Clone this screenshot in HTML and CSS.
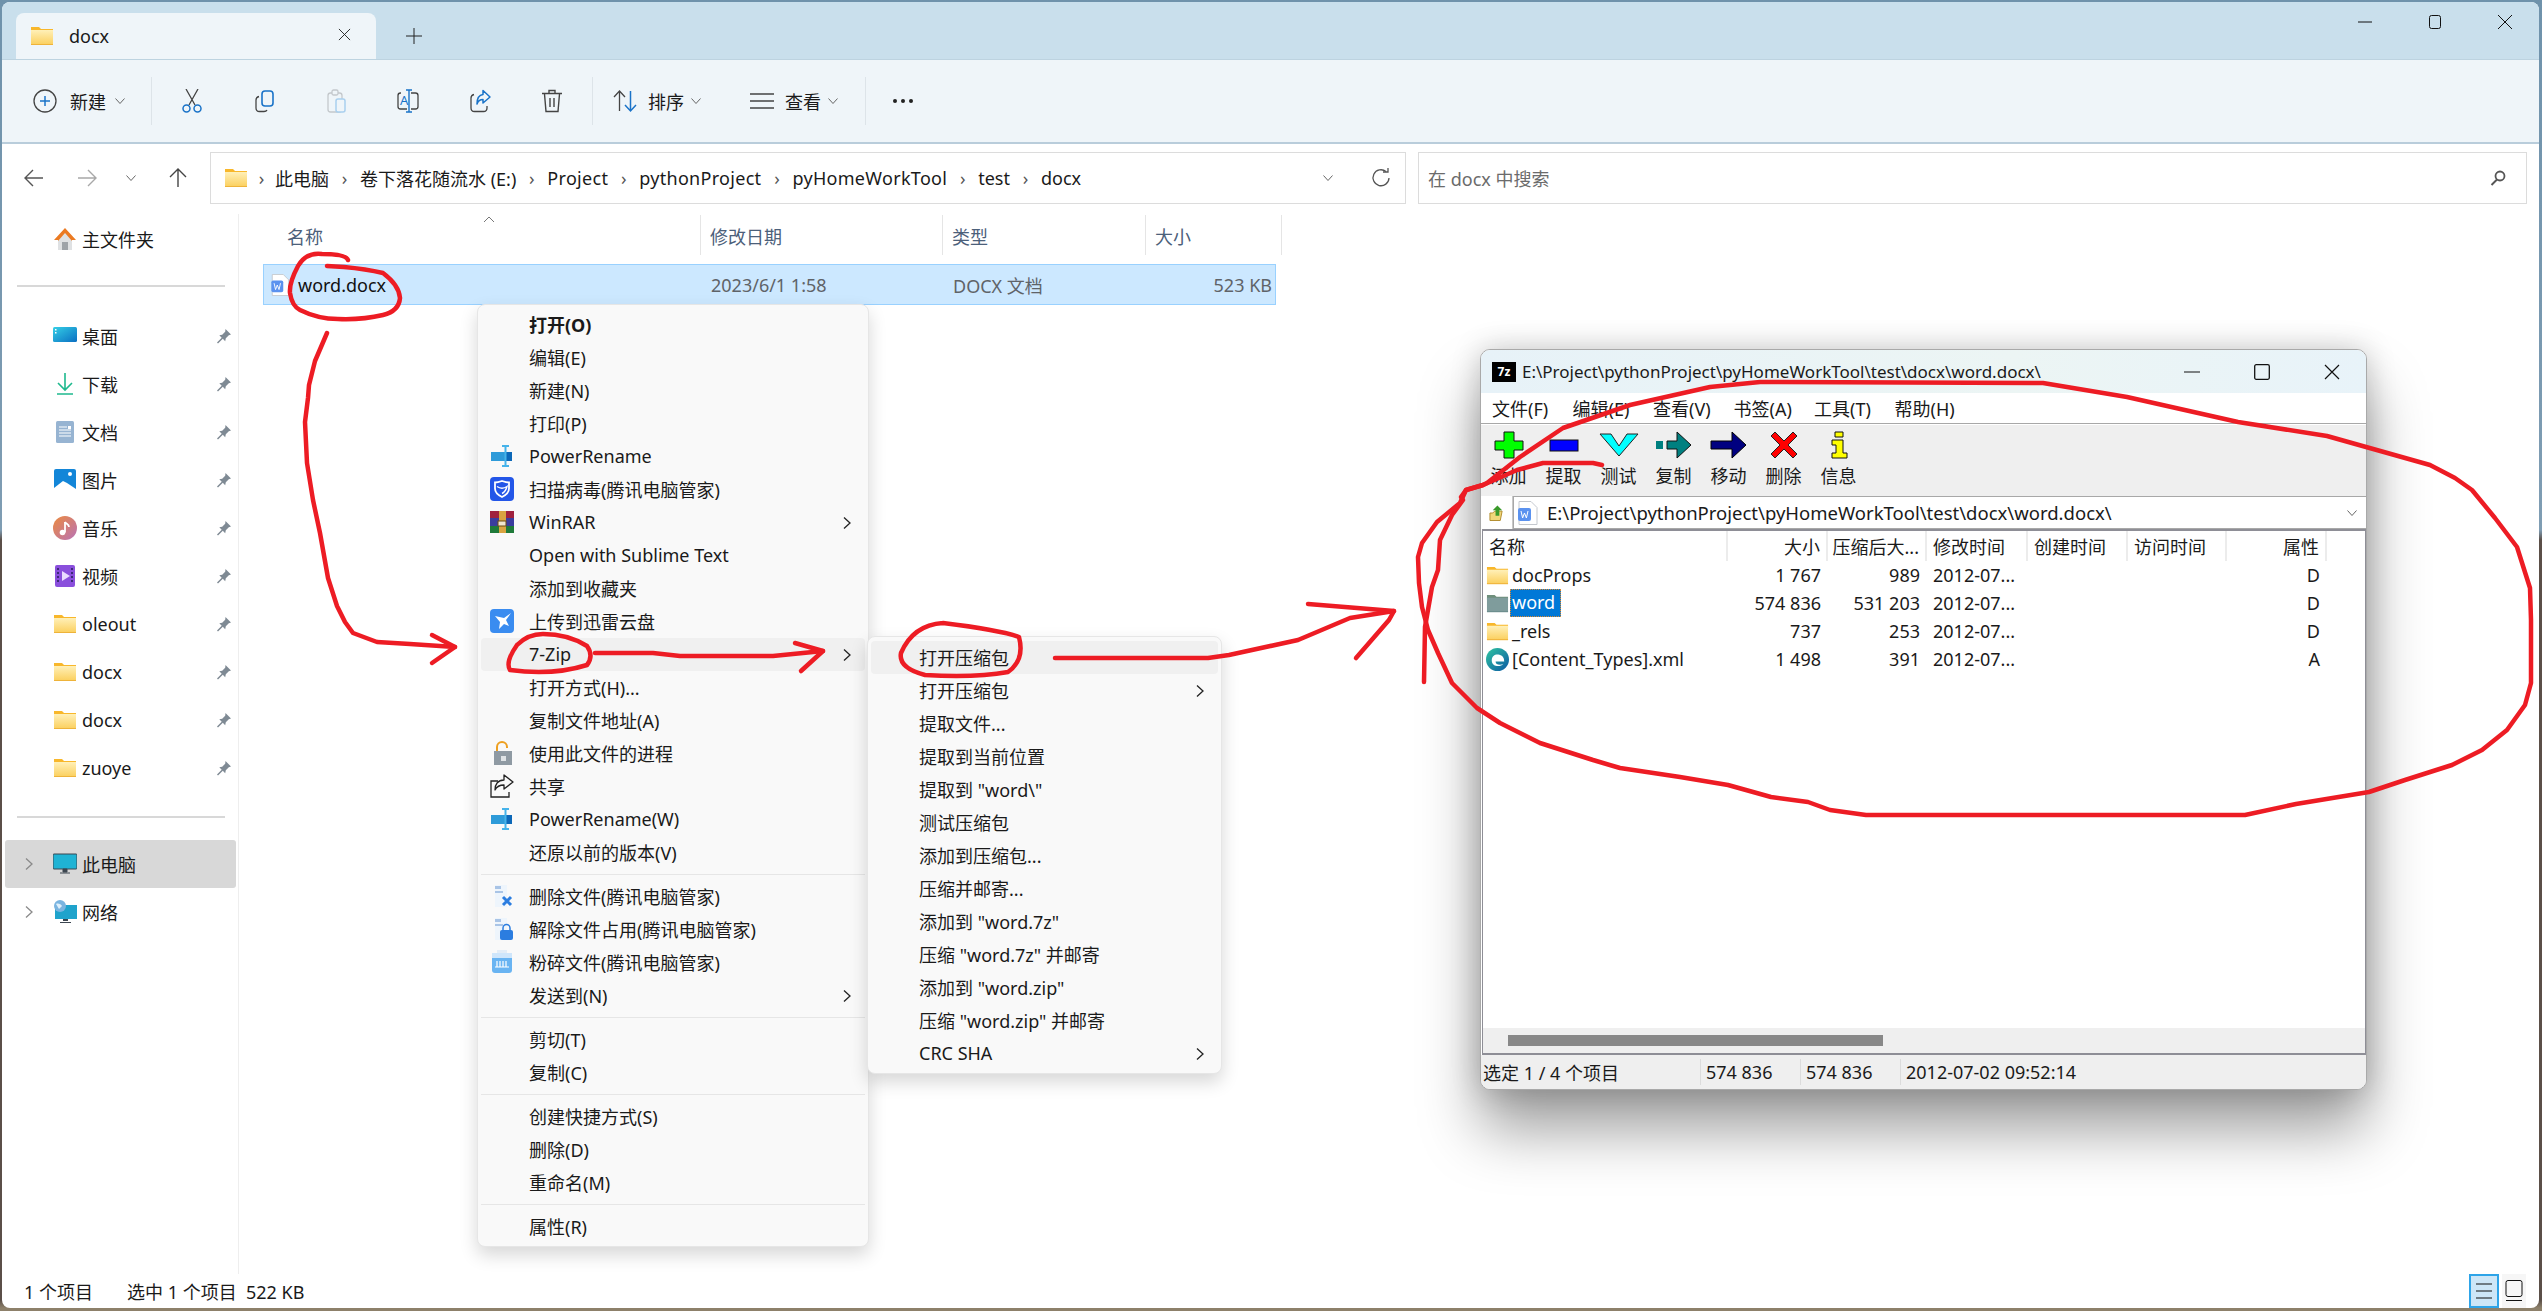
FILE: index.html
```html
<!DOCTYPE html>
<html lang="zh-CN">
<head>
<meta charset="utf-8">
<title>docx</title>
<link rel="stylesheet" href="styles.css">
</head>
<body>
<svg class="defs" aria-hidden="true">
  <defs>
    <linearGradient id="fg" x1="0" y1="0" x2="0" y2="1"><stop offset="0" stop-color="#fff0b8"/><stop offset="1" stop-color="#fbcf5c"/></linearGradient>
    <linearGradient id="dg" x1="0" y1="0" x2="1" y2="1"><stop offset="0" stop-color="#35cfe6"/><stop offset="1" stop-color="#0a6fc2"/></linearGradient>
    <linearGradient id="mg" x1="0" y1="0" x2="1" y2="1"><stop offset="0" stop-color="#ec8a3e"/><stop offset="1" stop-color="#b872b8"/></linearGradient>
    <linearGradient id="eg" x1="0" y1="0" x2="1" y2="1"><stop offset="0" stop-color="#30c5a0"/><stop offset="1" stop-color="#0c59a4"/></linearGradient>
    <symbol id="folder" viewBox="0 0 24 20"><path d="M1 1h8l2 2h12v3H1z" fill="#f8b72b"/><path d="M1 4h22v15H1z" fill="url(#fg)"/><path d="M1 18h22v1H1z" fill="#eeb33a"/></symbol>
    <symbol id="folder-sel" viewBox="0 0 24 20"><path d="M1 1h8l2 2h12v3H1z" fill="#6f8f7c"/><path d="M1 4h22v15H1z" fill="#7f9c9c"/><path d="M1 18h22v1H1z" fill="#6a8c8c"/></symbol>
    <symbol id="pin" viewBox="0 0 16 16"><path d="M9.500 1 15 6.500l-2.200.8-3 3-.6 2.900-2.400-2.400L2 15.500l-1-1 4.700-4.800-2.400-2.400 2.900-.6 3-3z" fill="#7f8a94"/></symbol>
    <symbol id="doc" viewBox="0 0 20 24"><path d="M1 .5h12l6 6v17H1z" fill="#fff" stroke="#c4c8ce"/><rect x="0" y="7" width="13" height="13" rx="2" fill="#5b92ef"/><path d="M3 10l1.600 7 1.900-5 1.900 5L10 10" fill="none" stroke="#fff"/></symbol>
    <symbol id="rename" viewBox="0 0 24 24"><rect x="1" y="8" width="15" height="9" fill="#2e9bd9"/><rect x="15" y="8" width="7" height="9" fill="#0c68b8"/><path d="M15.500 2v20M12 2h7M12 22h7" stroke="#46b3ea" stroke-width="2" fill="none"/></symbol>
    <symbol id="chev" viewBox="0 0 10 14"><path d="M2 1.500 8 7l-6 5.500" fill="none" stroke="#222" stroke-width="1.300"/></symbol>
    <symbol id="down" viewBox="0 0 12 8"><path d="M1.500 1.500 6 6.500l4.500-5" fill="none" stroke="#666" stroke-width="1"/></symbol>
    <symbol id="right" viewBox="0 0 10 14"><path d="M2 1.500 8 7l-6 5.500" fill="none" stroke="#8a8a8a" stroke-width="1.300"/></symbol>
    <symbol id="filedel" viewBox="0 0 24 24"><path d="M5 1h12v22H5z" fill="#eef5fc"/><path d="M5 2h6v3H5zM5 7h8v2H5z" fill="#a9c4e6"/></symbol>
  </defs>
</svg>

<div class="desktop">
  <div class="explorer">
    <div class="tabbar">
      <div class="tab">
        <svg class="ic-folder"><use href="#folder"/></svg>
        <span class="tab-title">docx</span>
        <svg class="tab-x" viewBox="0 0 14 14"><path d="M1 1l12 12M13 1 1 13" stroke="#222" fill="none"/></svg>
      </div>
      <svg class="tab-plus" viewBox="0 0 16 16"><path d="M8 0v16M0 8h16" stroke="#222" fill="none"/></svg>
      <div class="caption">
        <svg class="cap-btn" viewBox="0 0 16 16"><path d="M1 8h14" stroke="#111" fill="none"/></svg>
        <svg class="cap-btn" viewBox="0 0 16 16"><rect x="2.500" y="1.500" width="11" height="13" rx="2" stroke="#111" fill="none"/></svg>
        <svg class="cap-btn" viewBox="0 0 16 16"><path d="M1 1l14 14M15 1 1 15" stroke="#111" fill="none"/></svg>
      </div>
    </div>

    <div class="toolbar">
      <div class="tb-new">
        <svg class="tb-ic" viewBox="0 0 24 24"><circle cx="12" cy="12" r="11" fill="none" stroke="#444" stroke-width="1.300"/><path d="M12 7v10M7 12h10" stroke="#1a73c8" stroke-width="1.500"/></svg>
        <span>新建</span>
        <svg class="tb-down"><use href="#down"/></svg>
      </div>
      <i class="tb-sep"></i>
      <div class="tb-btn"><svg class="tb-ic" viewBox="0 0 24 24"><path d="M6 0l9 16M18 0 9 16" fill="none" stroke="#444" stroke-width="1.300"/><circle cx="6.500" cy="19.500" r="3.500" fill="none" stroke="#1a73c8" stroke-width="1.500"/><circle cx="17.500" cy="19.500" r="3.500" fill="none" stroke="#1a73c8" stroke-width="1.500"/></svg></div>
      <div class="tb-btn"><svg class="tb-ic" viewBox="0 0 24 24"><rect x="10" y="2" width="11" height="15" rx="3" fill="none" stroke="#1a73c8" stroke-width="1.600"/><path d="M7 7.500c-2 .5-3 1.500-3 3.500v8c0 2.500 1.500 3.500 3.500 3.500H12c1.500 0 2.500-.5 3-1.500" fill="none" stroke="#444" stroke-width="1.300"/></svg></div>
      <div class="tb-btn"><svg class="tb-ic" viewBox="0 0 24 24"><rect x="4" y="4" width="14" height="19" rx="2.500" fill="none" stroke="#c4c8cc" stroke-width="1.300"/><rect x="8" y="1" width="6" height="5" rx="1.500" fill="#eff5f9" stroke="#c4c8cc" stroke-width="1.300"/><rect x="12" y="10" width="9" height="13" rx="2" fill="#eff5f9" stroke="#a9cfee" stroke-width="1.500"/></svg></div>
      <div class="tb-btn"><svg class="tb-ic" viewBox="0 0 24 24"><path d="M5 4h-.5A2.500 2.500 0 0 0 2 6.500v11A2.500 2.500 0 0 0 4.500 20H11M15 4h4.500A2.500 2.500 0 0 1 22 6.500v11a2.500 2.500 0 0 1-2.500 2.500H15" fill="none" stroke="#444" stroke-width="1.300"/><path d="M13 1v22M10 1h6M10 23h6" stroke="#1a73c8" stroke-width="1.400" fill="none"/><text class="tb-a" x="4" y="16">A</text></svg></div>
      <div class="tb-btn"><svg class="tb-ic" viewBox="0 0 24 24"><path d="M6 5.500C4 6 3 7 3 9v10c0 2 1.500 3.500 3.500 3.500h9c2 0 3.500-1.500 3.500-3.500v-2" fill="none" stroke="#444" stroke-width="1.300"/><path d="M15 1.500 22 8l-7 6v-3.500c-3 0-5 1.500-6 4.500 0-6 2-9 6-9.500z" fill="none" stroke="#1a73c8" stroke-width="1.500" stroke-linejoin="round"/></svg></div>
      <div class="tb-btn"><svg class="tb-ic" viewBox="0 0 24 24"><path d="M2 4.500h20M9 4V1.500h6V4M4.500 5l1.500 17.500h12L19.500 5M10 9v9M14 9v9" fill="none" stroke="#444" stroke-width="1.400"/></svg></div>
      <i class="tb-sep"></i>
      <div class="tb-text tb-sort">
        <svg class="tb-ic" viewBox="0 0 24 24"><path d="M6.500 22V2M1 8l5.500-6L12 8" fill="none" stroke="#444" stroke-width="1.300"/><path d="M17.500 2v20M12 16l5.500 6 5.500-6" fill="none" stroke="#1a73c8" stroke-width="1.500"/></svg>
        <span>排序</span>
        <svg class="tb-down"><use href="#down"/></svg>
      </div>
      <div class="tb-text tb-view">
        <svg class="tb-ic" viewBox="0 0 24 24"><path d="M0 5h24M0 12h24M0 19h24" fill="none" stroke="#444" stroke-width="1.600"/></svg>
        <span>查看</span>
        <svg class="tb-down"><use href="#down"/></svg>
      </div>
      <i class="tb-sep"></i>
      <span class="tb-more"><i></i><i></i><i></i></span>
    </div>

    <div class="addr-row">
      <div class="nav-btns">
        <svg class="nav-ic" viewBox="0 0 20 20"><path d="M19 10H1M9 2l-8 8 8 8" fill="none" stroke="#555" stroke-width="1.400"/></svg>
        <svg class="nav-ic" viewBox="0 0 20 20"><path d="M1 10h18M11 2l8 8-8 8" fill="none" stroke="#a8a8a8" stroke-width="1.400"/></svg>
        <svg class="nav-dn"><use href="#down"/></svg>
        <svg class="nav-ic" viewBox="0 0 20 20"><path d="M10 19V1M2 9l8-8 8 8" fill="none" stroke="#444" stroke-width="1.400"/></svg>
      </div>
      <div class="breadcrumb">
        <svg class="ic-folder"><use href="#folder"/></svg>
        <span class="bc-sep first">›</span><span>此电脑</span>
        <span class="bc-sep">›</span><span>卷下落花随流水 (E:)</span>
        <span class="bc-sep">›</span><span class="bc-ls">Project</span>
        <span class="bc-sep">›</span><span class="bc-ls">pythonProject</span>
        <span class="bc-sep">›</span><span class="bc-ls">pyHomeWorkTool</span>
        <span class="bc-sep">›</span><span>test</span>
        <span class="bc-sep">›</span><span>docx</span>
        <svg class="bc-down"><use href="#down"/></svg>
        <svg class="bc-ref" viewBox="0 0 20 20"><path d="M15 3.500A8 8 0 1 0 18 10" fill="none" stroke="#555" stroke-width="1.300"/><path d="M12 4h5V0" fill="none" stroke="#555" stroke-width="1.300"/></svg>
      </div>
      <div class="searchbox">
        <span>在 docx 中搜索</span>
        <svg class="search-ic" viewBox="0 0 16 16"><circle cx="10" cy="6" r="4.500" fill="none" stroke="#555" stroke-width="1.800"/><path d="M7 9.500 1.500 15" stroke="#555" stroke-width="2"/></svg>
      </div>
    </div>

    <div class="main">
      <nav class="sidebar">
        <div class="nav-row">
          <svg class="nav-icon" viewBox="0 0 24 24"><path d="M12 1 1 13h4v10h14V13h4z" fill="#eb7a22"/><path d="M12 6l-7 8v9h14v-9z" fill="#dfe1e3"/><path d="M9 15h6v8H9z" fill="#9ea3a8"/></svg>
          <span class="nav-text">主文件夹</span>
        </div>
        <hr class="nav-hr first">
        <div class="nav-row">
          <svg class="nav-icon" viewBox="0 0 24 24"><rect y="3" width="24" height="15" rx="1.500" fill="url(#dg)"/><path d="M2 5h1.500v1.500H2zM2 8h1.500v1.500H2z" fill="#fff"/></svg>
          <span class="nav-text">桌面</span><svg class="nav-pin"><use href="#pin"/></svg>
        </div>
        <div class="nav-row">
          <svg class="nav-icon" viewBox="0 0 24 24"><path d="M12 1v17M5 11l7 7 7-7M4 22h16" fill="none" stroke="#1fb98e" stroke-width="1.600"/></svg>
          <span class="nav-text">下载</span><svg class="nav-pin"><use href="#pin"/></svg>
        </div>
        <div class="nav-row">
          <svg class="nav-icon" viewBox="0 0 24 24"><rect x="3" y="1" width="18" height="22" rx="1.500" fill="#97b4d2"/><path d="M6 7h8M6 10h12M6 13h12M6 16h12" stroke="#fff" stroke-width="1.100"/><rect x="15" y="6" width="3" height="3" fill="#fff"/></svg>
          <span class="nav-text">文档</span><svg class="nav-pin"><use href="#pin"/></svg>
        </div>
        <div class="nav-row">
          <svg class="nav-icon" viewBox="0 0 24 24"><rect x="1" y="1" width="22" height="22" rx="2" fill="#1386d8"/><path d="M1 23v-3l9-7 4 2 9 6v2z" fill="#fff"/><circle cx="17" cy="6" r="2" fill="#fff"/></svg>
          <span class="nav-text">图片</span><svg class="nav-pin"><use href="#pin"/></svg>
        </div>
        <div class="nav-row">
          <svg class="nav-icon" viewBox="0 0 24 24"><circle cx="12" cy="12" r="12" fill="url(#mg)"/><path d="M12 6v10.500" stroke="#fff" stroke-width="1.800"/><path d="M12 6c1 2 4 2 4 5" fill="none" stroke="#fff" stroke-width="1.800"/><circle cx="9.500" cy="16.500" r="2.800" fill="#fff"/></svg>
          <span class="nav-text">音乐</span><svg class="nav-pin"><use href="#pin"/></svg>
        </div>
        <div class="nav-row">
          <svg class="nav-icon" viewBox="0 0 24 24"><rect x="2" y="1" width="20" height="22" rx="2" fill="#8a4fdc"/><path d="M4 4h2v2H4zM4 8h2v2H4zM4 12h2v2H4zM4 16h2v2H4zM18 4h2v2h-2zM18 8h2v2h-2zM18 12h2v2h-2zM18 16h2v2h-2z" fill="#3d2a78"/><path d="M9 7l8 5-8 5z" fill="#eadcff"/></svg>
          <span class="nav-text">视频</span><svg class="nav-pin"><use href="#pin"/></svg>
        </div>
        <div class="nav-row"><svg class="nav-icon"><use href="#folder"/></svg><span class="nav-text">oleout</span><svg class="nav-pin"><use href="#pin"/></svg></div>
        <div class="nav-row"><svg class="nav-icon"><use href="#folder"/></svg><span class="nav-text">docx</span><svg class="nav-pin"><use href="#pin"/></svg></div>
        <div class="nav-row"><svg class="nav-icon"><use href="#folder"/></svg><span class="nav-text">docx</span><svg class="nav-pin"><use href="#pin"/></svg></div>
        <div class="nav-row"><svg class="nav-icon"><use href="#folder"/></svg><span class="nav-text">zuoye</span><svg class="nav-pin"><use href="#pin"/></svg></div>
        <hr class="nav-hr">
        <div class="nav-row is-active">
          <svg class="nav-tw"><use href="#right"/></svg>
          <svg class="nav-icon" viewBox="0 0 24 24"><rect x="0" y="2" width="24" height="15" rx="1" fill="#1fb3d4" stroke="#3c4650"/><path d="M10 17h4v3h-4zM7 21h10" fill="#3c4650" stroke="#3c4650"/></svg>
          <span class="nav-text">此电脑</span>
        </div>
        <div class="nav-row">
          <svg class="nav-tw"><use href="#right"/></svg>
          <svg class="nav-icon" viewBox="0 0 24 24"><rect x="2" y="5" width="22" height="14" fill="#1fa3cc"/><path d="M10 19h5v2h-5zM7 22h11v1H7z" fill="#3c4650"/><circle cx="7" cy="6" r="6" fill="#7ab4e0"/><path d="M3 4c2-1 5 0 6 2l-3 3z" fill="#dff0fb"/></svg>
          <span class="nav-text">网络</span>
        </div>
      </nav>

      <section class="files">
        <svg class="sort-caret" viewBox="0 0 12 7"><path d="M1 6l5-5 5 5" fill="none" stroke="#777"/></svg>
        <div class="col-head">
          <span class="col-name">名称</span>
          <span>修改日期</span>
          <span>类型</span>
          <span>大小</span>
        </div>
        <div class="file-row">
          <span class="f-name"><svg class="f-ic"><use href="#doc"/></svg><b>word.docx</b></span>
          <span>2023/6/1 1:58</span>
          <span>DOCX 文档</span>
          <span class="f-size">523 KB</span>
        </div>
      </section>
    </div>

    <footer class="statusbar">
      <span class="st-a">1 个项目</span>
      <span>选中 1 个项目&nbsp; 522 KB</span>
      <span class="view-btn is-on"><svg viewBox="0 0 20 24"><path d="M2 5h16M2 12h16M2 19h16" stroke="#111" fill="none"/></svg></span>
      <span class="view-btn"><svg viewBox="0 0 20 24"><rect x="2" y="1.500" width="16" height="16" rx="2" stroke="#111" fill="none"/><path d="M2 21.500h16" stroke="#111"/></svg></span>
    </footer>
  </div>

  <div class="menu ctx">
    <div class="mi is-bold"><span class="mi-ic"></span>打开(O)</div>
    <div class="mi"><span class="mi-ic"></span>编辑(E)</div>
    <div class="mi"><span class="mi-ic"></span>新建(N)</div>
    <div class="mi"><span class="mi-ic"></span>打印(P)</div>
    <div class="mi"><span class="mi-ic"><svg viewBox="0 0 24 24"><use href="#rename"/></svg></span>PowerRename</div>
    <div class="mi"><span class="mi-ic"><svg viewBox="0 0 24 24"><rect width="24" height="24" rx="4" fill="#2356e8"/><path d="M12 4c3 1 5 1.500 7 1.500v6c0 4-3 6.500-7 8.500-4-2-7-4.500-7-8.500v-6C7 5.500 9 5 12 4z" fill="none" stroke="#fff" stroke-width="1.800"/><path d="M7 9.500c3 2 7 2 10 0-1 4-3 6-5 7" fill="none" stroke="#fff" stroke-width="1.400"/></svg></span>扫描病毒(腾讯电脑管家)</div>
    <div class="mi"><span class="mi-ic"><svg viewBox="0 0 24 24"><rect y="1" width="24" height="7" fill="#a0213e"/><rect y="8" width="24" height="8" fill="#3a3d9e"/><rect y="16" width="24" height="7" fill="#1f7a3a"/><rect x="9" y="1" width="7" height="22" fill="#d9a441"/><rect x="8" y="11" width="8" height="5" fill="#efe6cf" stroke="#6b4d12"/></svg></span>WinRAR<svg class="mi-chev"><use href="#chev"/></svg></div>
    <div class="mi"><span class="mi-ic"></span>Open with Sublime Text</div>
    <div class="mi"><span class="mi-ic"></span>添加到收藏夹</div>
    <div class="mi"><span class="mi-ic"><svg viewBox="0 0 24 24"><rect width="24" height="24" rx="4" fill="#3a8cf0"/><path d="M21 4 14 9 5 7l5 6-1 7 5-5 5 2-3-6z" fill="#fff"/></svg></span>上传到迅雷云盘</div>
    <div class="mi is-hot"><span class="mi-ic"></span>7-Zip<svg class="mi-chev"><use href="#chev"/></svg></div>
    <div class="mi"><span class="mi-ic"></span>打开方式(H)...</div>
    <div class="mi"><span class="mi-ic"></span>复制文件地址(A)</div>
    <div class="mi"><span class="mi-ic"><svg viewBox="0 0 24 24"><path d="M7 11V6a5 5 0 0 1 10 0v1" fill="none" stroke="#eea021" stroke-width="2"/><rect x="4" y="10" width="18" height="14" fill="#8f9aa3"/><rect x="11" y="15" width="5" height="5" fill="#dfe3e6"/></svg></span>使用此文件的进程</div>
    <div class="mi"><span class="mi-ic"><svg viewBox="0 0 24 24"><path d="M8 7H1v16h18v-5" fill="none" stroke="#222" stroke-width="1.300"/><path d="M14 1l9 7-9 7v-4c-4 0-7 1-9 5 0-6 3-10 9-10z" fill="none" stroke="#222" stroke-width="1.300" stroke-linejoin="round"/></svg></span>共享</div>
    <div class="mi"><span class="mi-ic"><svg viewBox="0 0 24 24"><use href="#rename"/></svg></span>PowerRename(W)</div>
    <div class="mi"><span class="mi-ic"></span>还原以前的版本(V)</div>
    <hr class="mi-sep">
    <div class="mi"><span class="mi-ic"><svg viewBox="0 0 24 24"><use href="#filedel"/><path d="M13 13l8 8M21 13l-8 8" stroke="#2b7de0" stroke-width="3"/></svg></span>删除文件(腾讯电脑管家)</div>
    <div class="mi"><span class="mi-ic"><svg viewBox="0 0 24 24"><use href="#filedel"/><rect x="10" y="13" width="13" height="10" rx="2" fill="#2b7de0"/><path d="M13 13v-2a3.500 3.500 0 0 1 7 0v2" fill="none" stroke="#2b7de0" stroke-width="1.500"/></svg></span>解除文件占用(腾讯电脑管家)</div>
    <div class="mi"><span class="mi-ic"><svg viewBox="0 0 24 24"><path d="M7 0h10v3H7z" fill="#e3edf7"/><rect x="2" y="3" width="20" height="20" rx="3" fill="#69b4f2"/><path d="M2 3h20v5H2z" fill="#cfe6fb"/><path d="M7 11v6M10 11v6M13 11v6M16 11v6M5 17h14" stroke="#fff" stroke-width="1.200"/></svg></span>粉碎文件(腾讯电脑管家)</div>
    <div class="mi"><span class="mi-ic"></span>发送到(N)<svg class="mi-chev"><use href="#chev"/></svg></div>
    <hr class="mi-sep">
    <div class="mi"><span class="mi-ic"></span>剪切(T)</div>
    <div class="mi"><span class="mi-ic"></span>复制(C)</div>
    <hr class="mi-sep">
    <div class="mi"><span class="mi-ic"></span>创建快捷方式(S)</div>
    <div class="mi"><span class="mi-ic"></span>删除(D)</div>
    <div class="mi"><span class="mi-ic"></span>重命名(M)</div>
    <hr class="mi-sep">
    <div class="mi"><span class="mi-ic"></span>属性(R)</div>
  </div>

  <div class="menu sub">
    <div class="mi is-hot">打开压缩包</div>
    <div class="mi">打开压缩包<svg class="mi-chev"><use href="#chev"/></svg></div>
    <div class="mi">提取文件...</div>
    <div class="mi">提取到当前位置</div>
    <div class="mi">提取到 "word\"</div>
    <div class="mi">测试压缩包</div>
    <div class="mi">添加到压缩包...</div>
    <div class="mi">压缩并邮寄...</div>
    <div class="mi">添加到 "word.7z"</div>
    <div class="mi">压缩 "word.7z" 并邮寄</div>
    <div class="mi">添加到 "word.zip"</div>
    <div class="mi">压缩 "word.zip" 并邮寄</div>
    <div class="mi">CRC SHA<svg class="mi-chev"><use href="#chev"/></svg></div>
  </div>

  <div class="zip">
    <div class="z-title">
      <span class="z-logo">7z</span>
      <span class="z-path">E:\Project\pythonProject\pyHomeWorkTool\test\docx\word.docx\</span>
      <svg class="z-cap" viewBox="0 0 16 16"><path d="M0 8h16" stroke="#111" fill="none"/></svg>
      <svg class="z-cap" viewBox="0 0 16 16"><rect x=".7" y=".7" width="14.600" height="14.600" rx="1.500" stroke="#111" stroke-width="1.300" fill="none"/></svg>
      <svg class="z-cap" viewBox="0 0 16 16"><path d="M1 1l14 14M15 1 1 15" stroke="#111" stroke-width="1.200" fill="none"/></svg>
    </div>
    <div class="z-menu">
      <span>文件(F)</span><span>编辑(E)</span><span>查看(V)</span><span>书签(A)</span><span>工具(T)</span><span>帮助(H)</span>
    </div>
    <div class="z-tools">
      <div class="z-tool"><svg viewBox="0 0 40 28"><path d="M15 1h10v9h9v9h-9v8H15v-8H6v-9h9z" fill="#00ff00" stroke="#111"/></svg><span>添加</span></div>
      <div class="z-tool"><svg viewBox="0 0 40 28"><rect x="6" y="9" width="28" height="11" fill="#0000ff" stroke="#111"/></svg><span>提取</span></div>
      <div class="z-tool"><svg viewBox="0 0 40 28"><path d="M1 3h11l8 12L28 3h11L20 25z" fill="#00ffff" stroke="#222"/></svg><span>测试</span></div>
      <div class="z-tool"><svg viewBox="0 0 40 28"><rect x="2" y="10" width="7" height="8" fill="#008080"/><path d="M13 10h10V1l14 13-14 13v-9H13z" fill="#008080" stroke="#111"/></svg><span>复制</span></div>
      <div class="z-tool"><svg viewBox="0 0 40 28"><path d="M2 10h21V1l14 13-14 13v-9H2z" fill="#000080" stroke="#000"/></svg><span>移动</span></div>
      <div class="z-tool"><svg viewBox="0 0 40 28"><path d="M11 1l9 9 9-9 4 4-9 9 9 9-4 4-9-9-9 9-4-4 9-9-9-9z" fill="#ff0000" stroke="#222"/></svg><span>删除</span></div>
      <div class="z-tool"><svg viewBox="0 0 40 28"><path d="M16 1h8v5h-8zM13 9h11v13h4v5H13v-5h4v-8h-4z" fill="#ffff00" stroke="#111"/></svg><span>信息</span></div>
    </div>
    <div class="z-addr">
      <span class="z-up"><svg viewBox="0 0 16 18"><path d="M1 9h3l2-2h8l-2 10H1z" fill="#f0d77a" stroke="#b08a2a"/><path d="M9 1l5 5h-3v6H7V6H4z" fill="#3a9a2a"/></svg></span>
      <div class="z-combo">
        <svg class="z-doc"><use href="#doc"/></svg>
        <span>E:\Project\pythonProject\pyHomeWorkTool\test\docx\word.docx\</span>
        <svg class="z-combo-dn"><use href="#down"/></svg>
      </div>
    </div>
    <div class="z-list">
      <div class="z-head">
        <span class="z-name">名称</span><span class="z-r">大小</span><span class="z-r">压缩后大...</span><span>修改时间</span><span>创建时间</span><span>访问时间</span><span class="z-r">属性</span>
      </div>
      <div class="z-rows">
        <div class="z-row"><span class="z-name"><svg class="z-fi"><use href="#folder"/></svg>docProps</span><span class="z-r">1 767</span><span class="z-r">989</span><span>2012-07...</span><span></span><span></span><span class="z-r">D</span></div>
        <div class="z-row"><span class="z-name"><svg class="z-fi"><use href="#folder-sel"/></svg><em>word</em></span><span class="z-r">574 836</span><span class="z-r">531 203</span><span>2012-07...</span><span></span><span></span><span class="z-r">D</span></div>
        <div class="z-row"><span class="z-name"><svg class="z-fi"><use href="#folder"/></svg>_rels</span><span class="z-r">737</span><span class="z-r">253</span><span>2012-07...</span><span></span><span></span><span class="z-r">D</span></div>
        <div class="z-row"><span class="z-name"><svg class="z-fi" viewBox="0 0 24 24"><circle cx="12" cy="12" r="12" fill="url(#eg)"/><path d="M6 13c0-5 4-7 8-6 4 1 5 4 5 7h-9c0 3 3 4 8 3-3 3-12 3-12-4z" fill="#fff"/></svg>[Content_Types].xml</span><span class="z-r">1 498</span><span class="z-r">391</span><span>2012-07...</span><span></span><span></span><span class="z-r">A</span></div>
      </div>
      <div class="z-scroll"><i></i></div>
    </div>
    <div class="z-status">
      <span>选定 1 / 4 个项目</span><span>574 836</span><span>574 836</span><span>2012-07-02 09:52:14</span>
    </div>
  </div>

  <svg class="marks" viewBox="0 0 2542 1311" aria-hidden="true">
    <path class="ink" d="M348 260Q346 254 322 254Q306 252 298 266Q289 283 290 293Q292 306 300 310Q318 319 338 319Q362 320 383 315Q399 311 400 298Q399 285 383 273Q366 269 344 267L327 266"/>
    <polyline class="ink" points="327,333 315,361 309,385 308,398 305,422 307,463 313,500 320,533 328,578 337,606 345,622 353,633 377,642 410,644 455,647"/>
    <polyline class="ink" points="432,635 455,647 432,663"/>
    <path class="ink" d="M517 645Q528 634 543 634Q568 634 587 646Q594 656 587 665Q552 676 510 670Q505 662 517 645"/>
    <polyline class="ink" points="595,653 653,653 680,656 773,656 823,651"/>
    <polyline class="ink" points="795,643 823,651 801,671"/>
    <path class="ink" d="M943 623Q913 625 901 653Q898 668 925 675Q975 678 1008 672Q1025 660 1019 637Q1000 630 943 623"/>
    <polyline class="ink" points="1055,658 1208,658 1229,655 1298,640 1350,618 1394,611"/>
    <polyline class="ink" points="1308,604 1394,611 1389,620 1356,658"/>
    <polyline class="ink" points="1602,465 1593,463 1543,463 1517,470 1483,485 1466,490 1461,497 1463,500 1452,515 1440,540 1438,570 1432,587 1425,627 1424,682"/>
    <polyline class="ink" points="1466,490 1483,485 1487,483 1520,457 1563,428 1630,405 1710,387 1760,382 2043,383 2127,397 2238,422 2327,436 2430,465 2455,478 2472,490 2495,518 2517,547 2530,588 2531,620 2531,683 2525,705 2507,730 2482,750 2452,765 2405,780 2369,792 2296,804 2245,815 1866,815 1830,810 1808,802 1771,797 1728,785 1680,777 1620,768 1593,760 1540,743 1500,723 1477,708 1452,683 1438,653 1428,630 1422,607 1419,583 1418,557 1422,543 1437,522 1460,503 1466,490"/>
  </svg>
</div>
</body>
</html>
```
FILE: styles.css
```css
* { box-sizing: border-box; }
html, body { margin: 0; padding: 0; }
body {
  width: 2542px;
  height: 1311px;
  overflow: hidden;
  font-family: "Noto Sans", "Noto Sans CJK SC", sans-serif;
  font-size: 18px;
  color: #1a1a1a;
}
.defs { position: absolute; width: 0; height: 0; }

.desktop {
  position: relative;
  width: 2542px;
  height: 1311px;
  padding: 2px 3px 3px 2px;
  background: linear-gradient(180deg, #6f92ab 0, #7f9db3 530px, #5b4f48 540px, #5b4f48 1300px, #8d806a 1308px);
}

/* Explorer window */
.explorer {
  height: 1306px;
  display: flex;
  flex-direction: column;
  background: #fff;
  border-radius: 8px;
  overflow: hidden;
}
.tabbar {
  height: 58px;
  flex: none;
  display: flex;
  align-items: flex-end;
  background: #c9dfec;
  border-bottom: 1px solid #bdd3e0;
}
.tab {
  width: 360px;
  height: 46px;
  margin-left: 14px;
  padding-left: 14px;
  display: flex;
  align-items: center;
  background: #eff5f9;
  border-radius: 8px 8px 0 0;
}
.ic-folder { width: 24px; height: 20px; flex: none; }
.tab-title { margin-left: 15px; }
.tab-x { width: 13px; height: 13px; margin-left: auto; margin-right: 25px; margin-bottom: 4px; }
.tab-plus { width: 16px; height: 16px; margin: 0 0 15px 30px; }
.caption { margin-left: auto; align-self: flex-start; display: flex; gap: 54px; padding: 12px 26px 0 0; }
.cap-btn { width: 16px; height: 16px; }

.toolbar {
  height: 84px;
  flex: none;
  display: flex;
  align-items: center;
  background: #eff5f9;
  border-bottom: 2px solid #b9cddb;
  padding: 0 0 0 31px;
}
.tb-ic { width: 24px; height: 24px; flex: none; }
.tb-a { font-size: 13px; fill: #1a73c8; }
.tb-new { width: 118px; display: flex; align-items: center; gap: 13px; }
.tb-down { width: 12px; height: 8px; flex: none; }
.tb-new .tb-down, .tb-text .tb-down { margin-left: -5px; }
.tb-sep { width: 1px; height: 48px; background: #dde4e9; flex: none; }
.tb-new + .tb-sep { margin-right: 4px; }
.tb-btn { width: 72px; display: flex; justify-content: center; }
.tb-btn + .tb-sep { margin: 0 4px 0 4px; }
.tb-text { display: flex; align-items: center; gap: 11px; }
.tb-sort { width: 137px; margin-left: 16px; }
.tb-view { width: 114px; }
.tb-view + .tb-sep { margin: 0 0 0 1px; }
.tb-more { display: flex; gap: 4px; margin-left: 27px; }
.tb-more i { width: 4px; height: 4px; border-radius: 50%; background: #222; }

.addr-row {
  height: 70px;
  flex: none;
  display: flex;
  align-items: flex-start;
  padding-top: 8px;
  background: #fff;
}
.nav-btns { width: 208px; height: 52px; display: flex; align-items: center; padding-left: 22px; flex: none; }
.nav-ic { width: 20px; height: 20px; flex: none; margin-right: 33px; }
.nav-btns .nav-ic:nth-child(2) { margin-right: 28px; }
.nav-btns .nav-ic:last-child { margin-right: 0; }
.nav-dn { width: 12px; height: 8px; margin-right: 31px; flex: none; }
.breadcrumb {
  width: 1196px;
  height: 52px;
  display: flex;
  align-items: center;
  padding-left: 13px;
  border: 1px solid #dcdcdc;
  white-space: nowrap;
  flex: none;
}
.bc-sep { width: 31px; text-align: center; color: #555; flex: none; }
.bc-sep.first { width: 27px; }
.bc-ls { letter-spacing: .3px; }
.bc-down { width: 12px; height: 8px; margin-left: auto; margin-right: 37px; }
.bc-ref { width: 20px; height: 20px; margin-right: 14px; }
.searchbox {
  width: 1109px;
  height: 52px;
  margin-left: 12px;
  padding: 0 20px 0 9px;
  display: flex;
  align-items: center;
  justify-content: space-between;
  border: 1px solid #dcdcdc;
  color: #6b6b6b;
  flex: none;
}
.search-ic { width: 16px; height: 16px; }

.main { flex: 1; min-height: 0; display: flex; }
.sidebar { width: 237px; flex: none; border-right: 1px solid #eeeeee; padding: 1px 0 0 3px; }
.nav-row {
  position: relative;
  width: 231px;
  height: 48px;
  display: flex;
  align-items: center;
  padding-left: 48px;
  border-radius: 3px;
}
.nav-row.is-active { background: #d8d8d8; }
.nav-icon { width: 24px; height: 24px; flex: none; }
.nav-text { margin-left: 5px; }
.nav-pin { width: 16px; height: 16px; margin-left: auto; margin-right: 4px; }
.nav-tw { position: absolute; left: 19px; top: 17px; width: 10px; height: 14px; }
.nav-hr { width: 208px; height: 2px; margin: 24px 0 22px 12px; border: 0; background: #d8d8d8; }
.nav-hr.first { margin-top: 22px; margin-bottom: 25px; }

.files { position: relative; flex: 1; padding: 1px 0 0 24px; }
.sort-caret { position: absolute; left: 244px; top: 2px; width: 12px; height: 7px; }
.col-head {
  width: 1019px;
  height: 40px;
  display: grid;
  grid-template-columns: 438px 242px 203px 136px;
  color: #4c607a;
}
.col-head span { display: flex; align-items: center; padding-left: 9px; border-right: 1px solid #e5e5e5; padding-top: 2px; }
.col-head .col-name { padding-left: 24px; }
.file-row {
  width: 1013px;
  height: 41px;
  margin-top: 9px;
  display: grid;
  grid-template-columns: 438px 242px 203px 130px;
  align-items: center;
  background: #cce8ff;
  border: 1px solid #99d1ff;
  color: #5f6368;
}
.file-row span { padding-left: 9px; white-space: nowrap; }
.file-row .f-name { display: flex; align-items: center; padding-left: 7px; }
.file-row b { font-weight: 400; color: #111; margin-left: 8px; }
.file-row .f-size { text-align: right; padding-right: 5px; }
.f-ic { width: 19px; height: 22px; flex: none; }

.statusbar { height: 34px; flex: none; display: flex; align-items: center; font-size: 18px; }
.statusbar .st-a { margin-left: 22px; margin-right: 34px; }
.view-btn { width: 30px; height: 34px; display: flex; align-items: center; justify-content: center; flex: none; }
.view-btn svg { width: 20px; height: 24px; }
.view-btn.is-on { margin-left: auto; margin-right: 3px; border: 2px solid #2ea4e8; background: #cde6f7; }
.view-btn:last-child { width: 24px; margin-right: 13px; background: #f6f6f6; }

/* Context menus */
.menu {
  position: absolute;
  background: #f9f9f9;
  border: 1px solid #e6e6e6;
  border-radius: 8px;
  box-shadow: 0 8px 18px rgba(0, 0, 0, .16);
}
.ctx { left: 477px; top: 304px; width: 392px; height: 943px; padding: 2.5px 3px 3px; }
.sub { left: 867px; top: 636px; width: 355px; height: 438px; padding: 3.5px 3px 3px; }
.mi { position: relative; height: 33px; display: flex; align-items: center; white-space: nowrap; border-radius: 4px; }
.ctx .mi { padding-left: 9px; }
.sub .mi { padding-left: 48px; }
.mi.is-bold { font-weight: 700; }
.mi.is-hot { background: #f0f0f0; }
.mi-ic { width: 39px; height: 24px; flex: none; display: block; }
.mi-ic svg { width: 24px; height: 24px; display: block; }
.mi-chev { position: absolute; right: 13px; top: 10px; width: 10px; height: 14px; }
.mi-sep { height: 1px; margin: 5px 0; border: 0; background: #e6e6e6; }

/* 7-Zip window */
.zip {
  position: absolute;
  left: 1480px;
  top: 349px;
  width: 887px;
  height: 741px;
  display: flex;
  flex-direction: column;
  background: #fff;
  border: 1px solid #a9a9a9;
  border-radius: 10px;
  box-shadow: 0 40px 60px rgba(0, 0, 0, .38), 0 0 30px rgba(0, 0, 0, .2);
  overflow: hidden;
}
.z-title {
  height: 43px;
  flex: none;
  display: flex;
  align-items: center;
  padding-left: 12px;
  background: linear-gradient(90deg, #e7f2f8, #ecf5f4 60%, #e8f3f9);
}
.z-logo {
  width: 22px;
  height: 18px;
  flex: none;
  background: #000;
  color: #fff;
  border: 1px solid #000;
  outline: 1px solid #000;
  font-size: 12px;
  font-weight: 700;
  line-height: 16px;
  text-align: center;
}
.z-path { margin-left: 7px; font-size: 17px; }
.z-cap { width: 16px; height: 16px; flex: none; }
.z-path + .z-cap { margin-left: auto; }
.z-cap + .z-cap { margin-left: 54px; }
.z-cap:last-child { margin-right: 26px; }
.z-menu {
  height: 31px;
  flex: none;
  display: flex;
  padding-left: 11px;
  align-items: center;
  background: #fff;
  border-bottom: 1px solid #a8a8a8;
}
.z-menu span { width: 80.500px; white-space: nowrap; }
.z-tools {
  height: 72px;
  flex: none;
  display: flex;
  padding: 6px 0 0 0;
  background: #efefef;
  border-top: 1px solid #fff;
}
.z-tool { width: 55px; display: flex; flex-direction: column; align-items: center; }
.z-tool svg { width: 40px; height: 28px; }
.z-tool span { margin-top: 5px; line-height: 24px; white-space: nowrap; }
.z-addr { height: 33px; flex: none; display: flex; background: #efefef; }
.z-up { width: 32px; flex: none; display: flex; align-items: center; justify-content: center; background: #fff; border-right: 1px solid #c8c8c8; }
.z-up svg { width: 15px; height: 18px; }
.z-combo { flex: 1; display: flex; align-items: center; padding-left: 4px; background: #fff; border: 1px solid #a8a8a8; border-right: 0; }
.z-combo > span { margin-left: 9px; font-size: 18.500px; }
.z-doc { width: 20px; height: 24px; flex: none; }
.z-combo-dn { width: 12px; height: 8px; margin-left: auto; margin-right: 8px; }
.z-list { flex: 1; min-height: 0; display: flex; flex-direction: column; border: 2px solid #8e8e96; border-width: 2px 1px 2px 1px; margin-left: 1px; }
.z-head, .z-row { display: grid; grid-template-columns: 245px 100px 99px 101px 100px 99px 100px; }
.z-head { height: 30px; flex: none; }
.z-head span { display: flex; align-items: center; padding-left: 6px; border-right: 2px solid #ececec; white-space: nowrap; }
.z-head .z-r { justify-content: flex-end; padding-right: 6px; }
.z-rows { flex: 1; min-height: 0; }
.z-row { height: 28px; align-items: center; }
.z-row span { white-space: nowrap; padding-left: 6px; }
.z-row .z-r { text-align: right; padding-right: 7px; }
.z-row .z-name { display: flex; align-items: center; padding-left: 3px; }
.z-fi { width: 23px; height: 23px; margin-right: 3px; flex: none; }
.z-row em { font-style: normal; background: #0078d7; color: #fff; outline: 1px dotted #e08a2e; outline-offset: -1px; padding: 0 6px 0 2px; margin-left: -2px; height: 28px; line-height: 26px; }
.z-scroll { height: 25px; flex: none; padding: 7px 0 0 25px; background: #efefef; }
.z-scroll i { display: block; width: 375px; height: 11px; background: #888; }
.z-status {
  height: 34px;
  flex: none;
  display: flex;
  align-items: center;
  background: #efefef;
}
.z-status span { height: 26px; display: flex; align-items: center; padding-left: 5px; width: 100px; border-left: 1px solid #dcdcdc; white-space: nowrap; }
.z-status span:first-child { width: 219px; padding-left: 2px; border-left: 0; }

.marks { position: absolute; left: 0; top: 0; width: 2542px; height: 1311px; pointer-events: none; }
.ink { fill: none; stroke: #ed1c24; stroke-width: 4.500; stroke-linecap: round; stroke-linejoin: round; }
```
